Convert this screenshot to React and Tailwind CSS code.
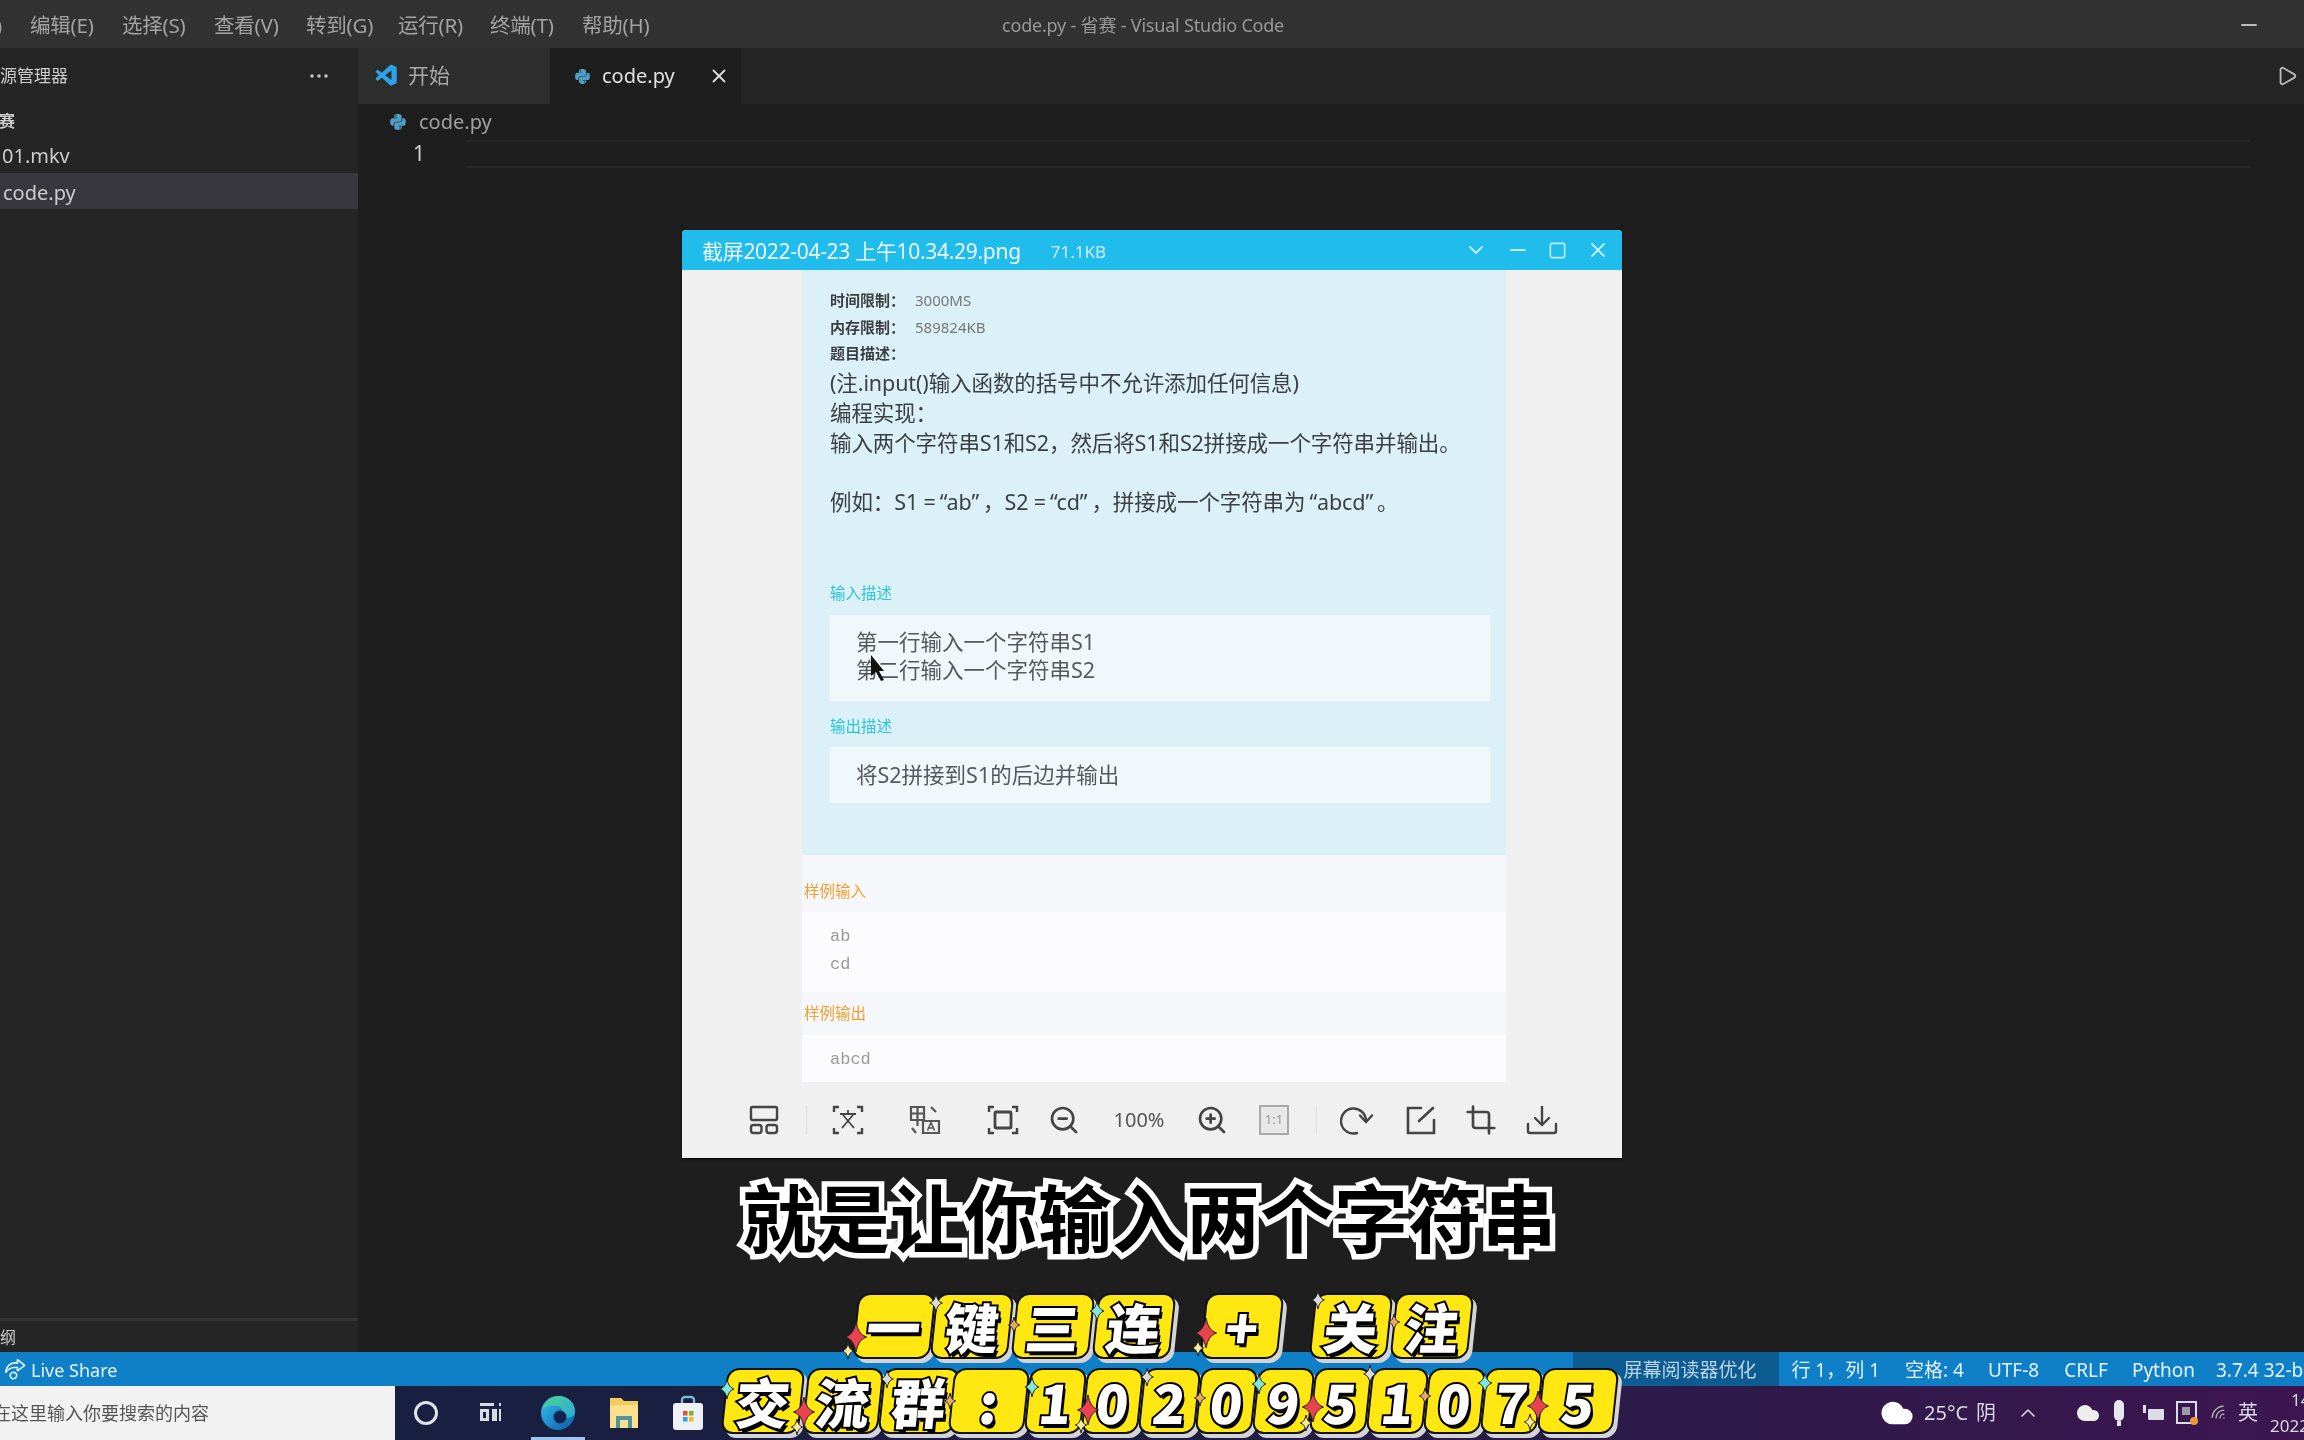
import { ChevronDown, ChevronUp, Cloud, Crop, Minus, MoreHorizontal, Play, Square, Wifi, X, ZoomIn, ZoomOut } from "lucide-react";
import { FaPython } from "react-icons/fa";
import { VscLiveShare, VscVscode } from "react-icons/vsc";

const menus = ["文件(F)", "编辑(E)", "选择(S)", "查看(V)", "转到(G)", "运行(R)", "终端(T)", "帮助(H)"];

const row1 = [
  { t: "一", w: "w-[78px]" },
  { t: "键", w: "w-[78px]" },
  { t: "三", w: "w-[78px] ml-[3px]" },
  { t: "连", w: "w-[78px] ml-[3px]" },
  { t: "+", w: "w-[78px] ml-[30px]" },
  { t: "关", w: "w-[78px] ml-[31px]" },
  { t: "注", w: "w-[78px] ml-[3px]" },
];
const row2 = [
  { t: "交", w: "w-[78px]" },
  { t: "流", w: "w-[76px] ml-[3px]" },
  { t: "群", w: "w-[76px]" },
  { t: ":", w: "w-[76px] -ml-[6px]" },
  ...["1", "0", "2", "0", "9", "5", "1", "0", "7"].map((t) => ({ t, w: "w-[57px]" })),
  { t: "5", w: "w-[76px]" },
];

// sparkles on the caption tiles: x, y, size, colour
const sparkles = [
  [856, 1337, 15, "#e8434e"], [848, 1351, 8, "#f6eb9a"], [936, 1303, 9, "#d9d9d9"], [1014, 1325, 8, "#e8a868"],
  [1097, 1311, 10, "#7fe8e0"], [1206, 1333, 15, "#e8434e"], [1198, 1348, 8, "#f6eb9a"], [1318, 1300, 9, "#d9d9d9"],
  [1394, 1322, 8, "#e8a868"], [727, 1389, 10, "#7fe8e0"], [804, 1412, 15, "#e8434e"], [797, 1427, 8, "#f6eb9a"],
  [887, 1379, 9, "#d9d9d9"], [950, 1401, 8, "#e8a868"], [1032, 1387, 10, "#7fe8e0"], [1088, 1410, 15, "#e8434e"],
  [1081, 1425, 8, "#f6eb9a"], [1147, 1377, 9, "#d9d9d9"], [1200, 1398, 8, "#e8a868"], [1259, 1384, 10, "#7fe8e0"],
  [1313, 1407, 15, "#e8434e"], [1306, 1423, 8, "#f6eb9a"], [1370, 1374, 9, "#d9d9d9"], [1425, 1396, 8, "#e8a868"],
  [1485, 1383, 10, "#7fe8e0"], [1538, 1406, 15, "#e8434e"], [1530, 1422, 8, "#f6eb9a"],
];

function Tile({ t, w }) {
  return (
    <div className={`${w} h-[66px] shrink-0 -skew-x-6 rounded-xl border-2 border-[#111] bg-[#ffe812] shadow-[4px_4px_0_#d4d4d8] flex items-center justify-center text-[54px] leading-none font-black text-white [-webkit-text-stroke:4px_#000] [paint-order:stroke_fill] [text-shadow:3px_4px_0_#000]`}>
      {t}
    </div>
  );
}

function PyIcon({ className }) {
  return <FaPython className={`text-[#4f9fc4] ${className}`} />;
}

function GridIcon() {
  return (
    <svg viewBox="0 0 32 32" className="w-8 h-8" fill="none" stroke="#444" strokeWidth="2.4">
      <rect x="3" y="3" width="26" height="13" rx="1.5" />
      <rect x="3" y="21" width="10.5" height="8" rx="2.5" />
      <rect x="18.5" y="21" width="10.5" height="8" rx="2.5" />
    </svg>
  );
}

function ScanTextIcon() {
  return (
    <svg viewBox="0 0 32 32" className="w-8 h-8" fill="none" stroke="#444" strokeWidth="2.4">
      <path d="M7 3H2v5M25 3h5v5M7 29H2v-5M25 29h5v-5" />
      <path d="M8 10h16M16 6v4M11 11l11 13M21 11L10 24" strokeWidth="1.8" />
    </svg>
  );
}

function TranslateIcon() {
  return (
    <svg viewBox="0 0 32 32" className="w-8 h-8" fill="none" stroke="#555" strokeWidth="2.2">
      <path d="M2 3h13v13H2zM2 9.5h13M8.5 3v19" />
      <path d="M14 17h16v12H14z" />
      <path d="M18.5 26.5l3.5-8 3.5 8M20 24h4" strokeWidth="1.6" />
      <path d="M3 24l4 5M22 3l5 5" />
    </svg>
  );
}

function FitIcon() {
  return (
    <svg viewBox="0 0 32 32" className="w-8 h-8" fill="none" stroke="#444" strokeWidth="2.4">
      <path d="M7 3H2v5M25 3h5v5M7 29H2v-5M25 29h5v-5" />
      <rect x="8" y="8" width="16" height="16" rx="1" strokeWidth="2.8" />
    </svg>
  );
}

function RotateIcon() {
  return (
    <svg viewBox="0 0 36 32" className="w-[36px] h-8 shrink-0" fill="none" stroke="#444" strokeWidth="2.4" strokeLinecap="round">
      <path d="M17 29A12.5 12.5 0 1 1 26 17" />
      <path d="M20 11.5L26 18l6-6.5" />
    </svg>
  );
}

function EditIcon() {
  return (
    <svg viewBox="0 0 32 32" className="w-8 h-8" fill="none" stroke="#444" strokeWidth="2.6" strokeLinecap="round">
      <path d="M16 4H3v25h26V16" />
      <path d="M14 17L28 4" />
    </svg>
  );
}

function SaveIcon() {
  return (
    <svg viewBox="0 0 32 32" className="w-8 h-8" fill="none" stroke="#444" strokeWidth="2.4" strokeLinecap="round" strokeLinejoin="round">
      <path d="M2 20v7a2 2 0 0 0 2 2h24a2 2 0 0 0 2-2v-7" />
      <path d="M16 3v18M9 14l7 7 7-7" />
    </svg>
  );
}

function Tool({ ml, children }) {
  return <div className={`${ml} w-8 h-8 shrink-0 flex items-center justify-center text-[#444]`}>{children}</div>;
}

function ImageWindow() {
  return (
    <div className="absolute left-[682px] top-[230px] w-[940px] h-[928px] rounded-t-sm bg-[#f1f0f1] flex flex-col shadow-[0_1px_2px_#000]">
      <div className="h-[40px] shrink-0 bg-[#1fbcec] rounded-t-sm flex items-center pl-5 text-[#eefaff]">
        <span className="pt-[3px] text-[21px] tracking-[-0.3px] leading-none">截屏2022-04-23 上午10.34.29.png</span>
        <span className="pt-[3px] ml-[30px] text-[17px] text-[#cdeefb]">71.1KB</span>
        <ChevronDown className="ml-auto size-6 text-[#c4eefc]" strokeWidth={1.8} />
        <Minus className="ml-[18px] size-6 text-[#c4eefc]" strokeWidth={1.8} />
        <Square className="ml-[18px] size-[19px] text-[#c4eefc]" strokeWidth={2} />
        <X className="ml-[19px] mr-[12px] size-6 text-[#c4eefc]" strokeWidth={1.8} />
      </div>
      <div className="mx-[120px] w-[704px] h-[812px] shrink-0 flex flex-col overflow-hidden">
        <div className="h-[585px] shrink-0 bg-[#dcf0f7] pl-[28px] flex flex-col text-[#3c3f42]">
          <div className="mt-[17px] h-[27px] flex items-center text-[15px] font-bold">
            <span className="w-[85px]">时间限制：</span><span className="font-normal text-[#777]">3000MS</span>
          </div>
          <div className="h-[26px] flex items-center text-[15px] font-bold">
            <span className="w-[85px]">内存限制：</span><span className="font-normal text-[#777]">589824KB</span>
          </div>
          <div className="h-[26px] flex items-center text-[15px] font-bold">题目描述：</div>
          <div className="text-[21.5px] leading-[30px] tracking-[-0.1px]">
            <p className="mt-[2px]">(注.input()输入函数的括号中不允许添加任何信息)</p>
            <p>编程实现：</p>
            <p>输入两个字符串S1和S2，然后将S1和S2拼接成一个字符串并输出。</p>
            <p className="mt-[29px]">
              例如：S1 =<span className="pl-[4px]">“</span>ab<span className="pr-[4px]">”</span>，S2 =<span className="pl-[4px]">“</span>cd<span className="pr-[4px]">”</span>，拼接成一个字符串为<span className="pl-[4px]">“</span>abcd<span className="pr-[4px]">”</span>。
            </p>
          </div>
          <div className="mt-[64px] h-[26px] flex items-center text-[15.5px] text-[#2bc4d8]">输入描述</div>
          <div className="relative mt-[8px] w-[660px] h-[86px] bg-[#f1f8fc] pl-[26px] pt-[13px] text-[21.5px] leading-[28px] text-[#55585c]">
            <p>第一行输入一个字符串S1</p>
            <p>第二行输入一个字符串S2</p>
            <svg viewBox="0 0 16 26" className="absolute left-[40px] top-[40px] w-4 h-[26px]" fill="#111">
              <path d="M1 0l13 16-5 0 5 9-3 1-5-9-5 4z" />
            </svg>
          </div>
          <div className="mt-[13px] h-[26px] flex items-center text-[15.5px] text-[#2bc4d8]">输出描述</div>
          <div className="mt-[7px] w-[660px] h-[56px] bg-[#f1f8fc] pl-[26px] flex items-center text-[21.5px] text-[#55585c]">
            将S2拼接到S1的后边并输出
          </div>
        </div>
        <div className="flex-1 bg-[#f6f7fa] flex flex-col text-[15.5px]">
          <div className="h-[57px] shrink-0 flex items-end pb-[9px] pl-[2px] text-[#f0a030]">样例输入</div>
          <div className="h-[80px] shrink-0 bg-[#fcfcfe] pl-[28px] pt-[11px] font-['Liberation_Mono',monospace] text-[17px] leading-[28px] text-[#999]">
            <p>ab</p>
            <p>cd</p>
          </div>
          <div className="h-[43px] shrink-0 flex items-center pl-[2px] text-[#f0a030]">样例输出</div>
          <div className="flex-1 bg-[#fcfcfe] pl-[28px] pt-[11px] font-['Liberation_Mono',monospace] text-[17px] leading-[28px] text-[#999]">abcd</div>
        </div>
      </div>
      <div className="flex-1 flex items-center pl-[66px]">
        <Tool ml=""><GridIcon /></Tool>
        <div className="ml-[26px] w-px h-7 bg-[#ddd] shrink-0" />
        <Tool ml="ml-[25px]"><ScanTextIcon /></Tool>
        <Tool ml="ml-[45px]"><TranslateIcon /></Tool>
        <Tool ml="ml-[46px]"><FitIcon /></Tool>
        <Tool ml="ml-[29px]"><ZoomOut className="size-8" strokeWidth={2} /></Tool>
        <span className="ml-[30px] w-[58px] shrink-0 text-center text-[20px] text-[#555]">100%</span>
        <Tool ml="ml-[28px]"><ZoomIn className="size-8" strokeWidth={2} /></Tool>
        <Tool ml="ml-[30px]">
          <div className="w-[30px] h-[30px] border-2 border-[#aaa] bg-[#e8e8e8] flex items-center justify-center text-[13px] text-[#999]">1:1</div>
        </Tool>
        <div className="ml-[26px] w-px h-7 bg-[#ddd] shrink-0" />
        <Tool ml="ml-[25px]"><RotateIcon /></Tool>
        <Tool ml="ml-[31px]"><EditIcon /></Tool>
        <Tool ml="ml-[28px]"><Crop className="size-8" strokeWidth={2} /></Tool>
        <Tool ml="ml-[29px]"><SaveIcon /></Tool>
      </div>
    </div>
  );
}

function TaskbarIcons() {
  return (
    <div className="flex items-center pl-[19px]">
      <div className="w-[24px] h-[24px] rounded-full border-[3px] border-[#dfe3ea]" />
      <svg viewBox="0 0 24 24" className="ml-[40px] w-6 h-6" fill="#d8dce4">
        <path d="M2 2h14v3H2zM2 8h9v12H2V8zm3 3v6h3v-6zM14 8h5v12h-5zM21 2h2v3h-2zM21 8h2v12h-2z" />
      </svg>
      <div className="relative ml-[29px] w-[54px] h-[54px] flex items-center justify-center">
        <svg viewBox="0 0 36 36" className="w-[36px] h-[36px]">
          <defs>
            <linearGradient id="edgeA" x1="0" y1="0" x2="1" y2="1">
              <stop offset="0" stopColor="#35c1f1" />
              <stop offset="1" stopColor="#0c59a4" />
            </linearGradient>
            <linearGradient id="edgeB" x1="0" y1="0" x2="1" y2="1">
              <stop offset="0" stopColor="#4ed48a" />
              <stop offset="1" stopColor="#2aa8e0" />
            </linearGradient>
          </defs>
          <circle cx="18" cy="18" r="17" fill="url(#edgeA)" />
          <path d="M2 16C4 6 12 1 19 1c9 0 16 7 16 15 0 5-4 7-8 7-3 0-6-1-6-3 3-2 2-8-4-9C11 10 4 11 2 16z" fill="url(#edgeB)" />
          <circle cx="20" cy="22" r="6.5" fill="#0f2450" />
        </svg>
        <div className="absolute bottom-0 left-0 right-0 h-[3px] bg-[#9cc4ee]" />
      </div>
      <svg viewBox="0 0 30 34" className="ml-[24px] w-[30px] h-[34px]">
        <path d="M1 2h11l3 3h14v27H1z" fill="#f3cd5c" />
        <path d="M1 9h28v23H1z" fill="#ffe08a" />
        <path d="M7 32V20h16v12h-4v-8h-8v8z" fill="#4f94a6" />
      </svg>
      <svg viewBox="0 0 32 36" className="ml-[33px] w-[32px] h-[36px]">
        <path d="M10 9V5a3 3 0 013-3h6a3 3 0 013 3v4" fill="none" stroke="#7fb4d8" strokeWidth="2.4" />
        <rect x="1" y="8" width="30" height="27" rx="3" fill="#eef1f5" />
        <rect x="11" y="16" width="4.5" height="4.5" fill="#e2542f" />
        <rect x="17" y="16" width="4.5" height="4.5" fill="#7ab42a" />
        <rect x="11" y="22" width="4.5" height="4.5" fill="#2a9ee8" />
        <rect x="17" y="22" width="4.5" height="4.5" fill="#f5b81c" />
      </svg>
    </div>
  );
}

export default function App() {
  return (
    <div className="relative w-[2304px] h-[1440px] overflow-hidden bg-[#1e1e1e] font-['Noto_Sans','Noto_Sans_CJK_SC',sans-serif]">
      <div className="relative h-full flex flex-col blur-[0.7px]">
        {/* title bar */}
        <div className="h-12 shrink-0 bg-[#323232] relative flex items-center pt-[2px] text-[20.5px] tracking-[-0.2px] text-[#a3a3a3] overflow-hidden">
          <div className="flex gap-[26px] -ml-[61px]">
            {menus.map((m, i) => (
              <span key={m} className={i === 0 ? "w-[65px] shrink-0 whitespace-nowrap" : "w-[66px] shrink-0 whitespace-nowrap"}>{m}</span>
            ))}
          </div>
          <span className="absolute left-[1002px] text-[18px] text-[#999]">code.py - 省赛 - Visual Studio Code</span>
          <Minus className="absolute left-[2237px] size-6 text-[#bbb]" strokeWidth={2} />
        </div>

        <div className="flex-1 flex min-h-0">
          {/* sidebar */}
          <div className="w-[358px] shrink-0 bg-[#252526] flex flex-col text-[#ccc] overflow-hidden">
            <div className="h-[56px] shrink-0 flex items-center text-[17px] -ml-[17px] pr-[27px]">
              <span>资源管理器</span>
              <MoreHorizontal className="ml-auto size-6 text-[#ccc]" strokeWidth={1.5} />
            </div>
            <div className="h-[36px] shrink-0 flex items-center text-[16px] font-bold -ml-[17px] -mt-[1px]">省赛</div>
            <div className="h-[34px] shrink-0 flex items-center text-[20px] pl-[2px]">01.mkv</div>
            <div className="h-[36px] shrink-0 flex items-center text-[20px] pl-[3px] pt-[3px] bg-[#37373d]">code.py</div>
            <div className="mt-auto h-[34px] shrink-0 border-t-[3px] border-[#333] flex items-center text-[16px] -ml-[16px]">大纲</div>
          </div>

          {/* editor */}
          <div className="flex-1 min-w-0 flex flex-col bg-[#1e1e1e]">
            <div className="h-[56px] shrink-0 bg-[#252526] flex items-center">
              <div className="w-[192px] h-full bg-[#2d2d2d] flex items-center pl-4 text-[21px] text-[#a8a8a8]">
                <VscVscode className="size-[26px] text-[#2aa3e8]" />
                <span className="ml-[8px]">开始</span>
              </div>
              <div className="w-[191px] h-full bg-[#1e1e1e] flex items-center pl-6 text-[20px] text-[#e2e2e2]">
                <PyIcon className="size-[17px]" />
                <span className="ml-[11px]">code.py</span>
                <X className="ml-[33px] size-[22px] text-[#ddd]" strokeWidth={2} />
              </div>
              <Play className="ml-auto mr-[6px] size-[22px] text-[#bbb]" strokeWidth={2} />
            </div>
            <div className="h-[36px] shrink-0 flex items-center pl-[31px] text-[20px] text-[#a0a0a0]">
              <PyIcon className="size-[18px]" />
              <span className="ml-[12px]">code.py</span>
            </div>
            <div className="h-[28px] shrink-0 flex items-center">
              <span className="w-[108px] shrink-0 pl-[55px] text-[21px] text-[#d0d0d0]">1</span>
              <div className="w-[1784px] h-full border-y-2 border-[#282828]" />
            </div>
          </div>
        </div>

        {/* status bar */}
        <div className="h-[34px] shrink-0 bg-[#0f80c8] flex items-center text-[19px] text-[#e4f2fb] whitespace-nowrap overflow-hidden">
          <VscLiveShare className="ml-[4px] size-[22px] shrink-0" />
          <span className="ml-[5px] pt-[2px] text-[18px] shrink-0">Live Share</span>
          <div className="ml-[1456px] w-[206px] shrink-0 h-full bg-[#0c5c92] flex items-center pl-[50px] pt-[2px] text-[#b9d4e6]">屏幕阅读器优化</div>
          <span className="ml-[12px] pt-[2px] shrink-0">行 1，列 1</span>
          <span className="ml-[25px] pt-[2px] shrink-0">空格: 4</span>
          <span className="ml-[24px] pt-[2px] shrink-0">UTF-8</span>
          <span className="ml-[25px] pt-[2px] shrink-0">CRLF</span>
          <span className="ml-[24px] pt-[2px] shrink-0">Python</span>
          <span className="ml-[21px] pt-[2px] shrink-0">3.7.4 32-bit</span>
        </div>

        {/* taskbar */}
        <div className="h-[54px] shrink-0 flex bg-gradient-to-r from-[#15213f] via-[#1d1d42] to-[#3d1550]">
          <div className="w-[395px] shrink-0 bg-[#f2f2f2] flex items-center overflow-hidden text-[18px] text-[#555] whitespace-nowrap">
            <span className="-ml-[7px]">在这里输入你要搜索的内容</span>
          </div>
          <TaskbarIcons />
          <div className="ml-auto w-[424px] shrink-0 flex items-center text-[#d9d9e4] whitespace-nowrap overflow-hidden">
            <Cloud className="size-[34px] shrink-0 text-white" fill="#fff" />
            <span className="ml-[10px] text-[20px]">25°C</span>
            <span className="ml-[8px] text-[20px]">阴</span>
            <ChevronUp className="ml-[20px] size-6 shrink-0" strokeWidth={1.6} />
            <Cloud className="ml-[36px] size-[24px] shrink-0 text-[#eee]" fill="#eee" />
            <svg viewBox="0 0 16 28" className="ml-[11px] w-[16px] h-[28px] shrink-0" fill="#e6e6ee">
              <rect x="3" y="1" width="10" height="21" rx="5" />
              <rect x="6" y="22" width="4" height="5" />
            </svg>
            <svg viewBox="0 0 22 16" className="ml-[16px] w-[22px] h-[16px] shrink-0" fill="#dcdce6">
              <rect x="0" y="0" width="3" height="8" />
              <rect x="5" y="4" width="16" height="11" rx="1" />
            </svg>
            <svg viewBox="0 0 22 24" className="ml-[11px] w-[22px] h-[24px] shrink-0">
              <rect x="1" y="1" width="19" height="21" fill="none" stroke="#dcdce6" strokeWidth="2" />
              <rect x="6" y="6" width="8" height="8" fill="#9a9aa8" />
              <circle cx="18" cy="20" r="4" fill="#e89a3a" />
            </svg>
            <Wifi className="ml-[12px] size-[19px] shrink-0 text-[#b8b8c4] -rotate-45" strokeWidth={1.6} />
            <span className="ml-[9px] text-[20px]">英</span>
            <div className="ml-[12px] shrink-0 flex flex-col leading-[26px] text-[17px]">
              <span className="pl-[21px]">14:34</span>
              <span>2022/4/23</span>
            </div>
          </div>
        </div>

        <ImageWindow />
      </div>

      {/* burned-in captions */}
      <div className="absolute left-[742px] top-[1167px] whitespace-nowrap text-[74px] leading-[96px] font-bold text-black [-webkit-text-stroke:11px_#fff] [paint-order:stroke_fill] font-['Noto_Sans_CJK_SC',sans-serif]">
        就是让你输入两个字符串
      </div>
      <div className="absolute left-[855px] top-[1293px] flex font-['Noto_Sans_CJK_SC',sans-serif]">
        {row1.map((c, i) => <Tile key={i} t={c.t} w={c.w} />)}
      </div>
      <div className="absolute left-[724px] top-[1368px] flex font-['Noto_Sans_CJK_SC',sans-serif]">
        {row2.map((c, i) => <Tile key={i} t={c.t} w={c.w} />)}
      </div>
      <svg viewBox="0 0 2304 1440" className="absolute inset-0 w-[2304px] h-[1440px] pointer-events-none">
        {sparkles.map(([x, y, s, c], i) => (
          <path
            key={i}
            d={`M${x} ${y - s}Q${x + s * 0.15} ${y - s * 0.15} ${x + s * 0.7} ${y}Q${x + s * 0.15} ${y + s * 0.15} ${x} ${y + s}Q${x - s * 0.15} ${y + s * 0.15} ${x - s * 0.7} ${y}Q${x - s * 0.15} ${y - s * 0.15} ${x} ${y - s}Z`}
            fill={c}
            stroke="#222"
            strokeWidth="1"
          />
        ))}
      </svg>
    </div>
  );
}
